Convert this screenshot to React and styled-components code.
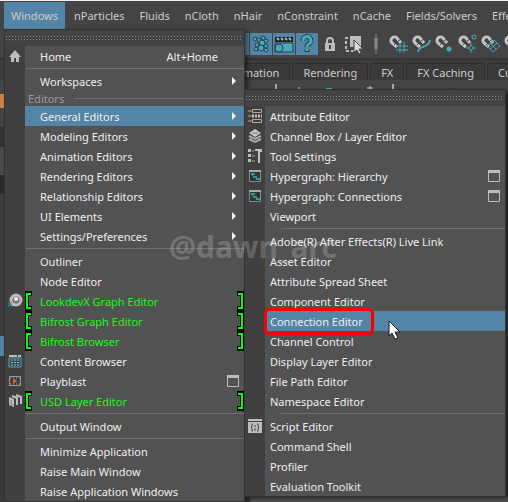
import React from 'react';
import styled, { createGlobalStyle } from 'styled-components';

const Global = createGlobalStyle`
  *, *::before, *::after { box-sizing: border-box; }
  body { margin: 0; background: #444; }
  button { font: inherit; color: inherit; }
`;

const teal = '#49a9b8';
const grey = '#bdbdbd';
const blue = '#5285a6';

const Page = styled.main`
  position: relative;
  display: flex;
  flex-direction: column;
  min-height: 100vh;
  overflow: hidden;
  background: #3d3d3d;
  color: #eee;
  font: 11px/20px 'Noto Sans', 'Open Sans', sans-serif;
`;

const MenuBar = styled.nav`
  display: flex;
  gap: 3px;
  height: 29px;
  padding: 1px 0 0 4px;
  border-top: 1px solid #f0f0f0;
  background: #444;
`;

const BarItem = styled.button`
  flex: none;
  padding: 0 ${(p) => (p.$open ? 7 : 6)}px;
  border: 0;
  line-height: 27px;
  white-space: nowrap;
  color: #ccc;
  background: ${(p) => (p.$open ? blue : 'transparent')};
`;

const Toolbar = styled.div`
  display: flex;
  align-items: center;
  gap: 1px;
  height: 29px;
  padding-left: 227px;
  background: #444;
`;

const Tool = styled.button`
  flex: none;
  display: grid;
  place-items: center;
  width: 22px;
  height: 22px;
  padding: 0;
  border: 0;
  background: ${(p) => (p.$on ? blue : 'transparent')};
`;

const Tabs = styled.div`
  display: flex;
  align-items: flex-end;
  gap: 2px;
  height: 22px;
  padding-left: 215px;
  border-top: 2px solid #353535;
  background: #3d3d3d;
`;

const Tab = styled.button`
  flex: none;
  height: 17px;
  padding: 0 10px;
  border: 1px solid #2e2e2e;
  border-bottom: 0;
  border-radius: 3px 3px 0 0;
  line-height: 17px;
  white-space: nowrap;
  color: #ccc;
  background: #3a3a3a;
`;

const Shelf = styled.div`
  display: flex;
  height: 14px;
  padding: 3px 0 0 262px;
  background: #444;
`;

const SideStrip = styled.div`
  display: flex;
  flex: 1;
  flex-direction: column;
  background: #3a3a3a;
`;

const Block = styled.div`
  flex: none;
  width: 4px;
  height: ${(p) => p.$h}px;
  background: ${(p) => p.$c};
`;

const StatusStrip = styled.div`
  height: 5px;
  margin: auto 0 0 250px;
  background: #535353;
`;

const MenuPanel = styled.div`
  position: absolute;
  z-index: 1;
  top: ${(p) => p.$top}px;
  left: ${(p) => p.$left}px;
  width: ${(p) => p.$width}px;
  border: 1px solid #333;
  background: linear-gradient(90deg, #404040 20px, #525252 20px);
  box-shadow: 3px 2px 4px rgba(0, 0, 0, 0.45);
`;

const TearOff = styled.div`
  height: 16px;
  padding: 6px 1px 0;
  background: #434343;

  &::before {
    content: '';
    display: block;
    height: 4px;
    background:
      linear-gradient(90deg, #858585 1px, transparent 1px) 0 0 / 3px 1px repeat-x,
      linear-gradient(90deg, #858585 1px, transparent 1px) 0 3px / 3px 1px repeat-x;
  }
`;

const Row = styled.div`
  display: flex;
  align-items: center;
  height: 20px;
  color: ${(p) => (p.$green ? '#19fa19' : '#eee')};
  background: ${(p) => (p.$active ? `linear-gradient(90deg, transparent 20px, ${blue} 20px)` : 'transparent')};
`;

const Command = styled.button`
  display: flex;
  flex: 1;
  align-items: center;
  height: 20px;
  padding: 0;
  border: 0;
  text-align: left;
  white-space: nowrap;
  background: none;
`;

const IconCell = styled.span`
  display: grid;
  flex: none;
  place-items: center;
  width: 20px;
  height: 20px;
`;

const Lead = styled.span`
  display: flex;
  flex: none;
  width: ${(p) => p.$w}px;
`;

const Label = styled.span`
  flex: 1;
  padding-top: 2px;
`;

const Shortcut = styled.span`
  padding: 2px 26px 0 0;
`;

const Trail = styled.span`
  display: flex;
  padding-right: ${(p) => p.$end}px;
`;

const OptionBox = styled.button`
  display: flex;
  margin-right: 5px;
  padding: 0;
  border: 0;
  background: none;
`;

const Divider = styled.hr`
  height: 1px;
  margin: 2px 0 2px ${(p) => p.$inset}px;
  border: 0;
  background: #707070;
`;

const Section = styled.div`
  display: flex;
  align-items: center;
  gap: 10px;
  height: 15px;
  padding-left: 23px;
  line-height: 15px;
  color: #9c9c9c;

  &::after {
    content: '';
    flex: 1;
    height: 1px;
    background: #707070;
  }
`;

const Highlight = styled.div`
  position: absolute;
  z-index: 3;
  top: 308px;
  left: 264px;
  width: 110px;
  height: 27px;
  border: 3px solid #f00;
  border-radius: 5px;
`;

const Watermark = styled.div`
  position: absolute;
  z-index: 2;
  top: 225px;
  left: 169px;
  font: bold 30px/44px 'Noto Sans', sans-serif;
  color: rgba(255, 255, 255, 0.2);
  pointer-events: none;
`;

const Pointer = styled.svg`
  position: absolute;
  z-index: 4;
  top: 320px;
  left: 388px;
`;

const Svg = ({ children, w = 16, h = 16 }) => (
  <svg width={w} height={h} viewBox={`0 0 ${w} ${h}`} fill="none" aria-hidden="true">
    {children}
  </svg>
);

const WindowIcon = () => (
  <Svg w={12} h={12}>
    <path d="M.5.5h11v11H.5z" stroke={grey} />
    <path d="M0 0h12v3H0z" fill={grey} />
  </Svg>
);

const Arrow = () => (
  <Svg w={4} h={8}>
    <path d="M0 0l4 4-4 4z" fill="#f4f4f4" />
  </Svg>
);

const Bracket = ({ right }) => (
  <Svg w={7} h={20}>
    <g transform={right ? 'translate(7 0) scale(-1 1)' : undefined}>
      <path d="M0 0h7v5H4v10h3v5H0z" fill="#000" />
      <path d="M6 3H2v14h4" stroke="#0f0" strokeWidth="2" />
    </g>
  </Svg>
);

const HypergraphIcon = () => (
  <Svg>
    <path d="M2.5 2.5h11v11h-11z" fill="#333" stroke="#8a8a8a" />
    <path d="M2 2h12v2H2z" fill="#aaa" />
    <path d="M4 5h4v2H4zM6 8h4v2H6zM9 10h4v2H9z" fill="#1ba39c" />
    <path d="M5 7l2 2M8 9l2 2" stroke="#1ba39c" />
  </Svg>
);

const icons = {
  home: (
    <Svg>
      <path d="M2 9l6-7 6 7h-2v5H9v-4H7v4H4V9z" fill={grey} />
    </Svg>
  ),
  lookdev: (
    <Svg>
      <circle cx="9" cy="7" r="5" fill="#777" stroke={grey} strokeWidth="3" />
      <circle cx="9" cy="6" r="2" fill="#f0f0f0" />
      <path d="M5 12h7" stroke={grey} strokeWidth="2" />
      <path d="M1 9l4 5M5 9l-4 5" stroke="#2b9fb3" />
    </Svg>
  ),
  content: (
    <Svg>
      <path d="M2 2h8v2H2zM11 2h3v2h-3z" fill={grey} />
      <path d="M2 5h12v9H2z" fill="#36474a" stroke={teal} />
      <path d="M4 7h8M4 9.500h8M4 12h8" stroke="#9cc3c9" strokeDasharray="2 1" />
    </Svg>
  ),
  blast: (
    <Svg>
      <path d="M2.5 3.5h11v9h-11z" stroke="#999" />
      <path d="M3 5h10M3 11h10" stroke="#999" strokeDasharray="1 2" />
      <path d="M6 5l4 3-4 3z" fill="#d8642e" />
    </Svg>
  ),
  usd: (
    <Svg>
      <path d="M2 4l5 2v8l-5-2z" fill={grey} />
      <path d="M5 3l5 2v7M9 2l5 2v7" stroke={grey} strokeWidth="2" />
      <path d="M4 7v4l2 1" stroke="#777" />
    </Svg>
  ),
  attribute: (
    <Svg>
      <path d="M1 3h4M1 8h4M1 13h4" stroke="#aaa" />
      <path d="M5.5 1.5h9v3h-9zM5.5 11.5h9v3h-9z" stroke="#aaa" />
      <path d="M5 8h10" stroke={grey} strokeWidth="3" strokeDasharray="2 1" />
    </Svg>
  ),
  layers: (
    <Svg>
      <path d="M8 1l6 4-6 4-6-4z" fill="#c8c8c8" />
      <path d="M2 8l6 3 6-3M2 11l6 3 6-3" stroke="#aaa" strokeWidth="2" />
      <path d="M5 5h6" stroke="#777" />
    </Svg>
  ),
  tools: (
    <Svg>
      <path d="M1 1h3v3H1zM1 6h3v3H1zM1 11h3v3H1z" fill={grey} />
      <path d="M5 3h2M5 8h3M5 13h3" stroke="#aaa" />
      <path d="M8 1h7v3h-2v11h-2V3H8z" fill={grey} />
    </Svg>
  ),
  hyper: <HypergraphIcon />,
  script: (
    <Svg>
      <path d="M1 1h14v2H1zM1 4h14v11H1z" fill={grey} />
      <path d="M6 6H5v2l-1 1 1 1v3h1M10 6h1v2l1 1-1 1v3h-1M8 7v2M8 10v3" stroke="#444" />
    </Svg>
  ),
};

const Magnet = ({ children }) => (
  <Svg w={22} h={22}>
    <path d="M13 10l-4-5a3.500 3.500 0 0 0-5 5l5 4" stroke="#c4c4c4" strokeWidth="3" />
    <path d="M10 8l3-2M6 12l2-2" stroke="#444" />
    {children}
  </Svg>
);

const tools = [
  { name: 'Snap selection', on: true, icon: null },
  {
    name: 'Particles',
    on: true,
    icon: (
      <Svg w={22} h={22}>
        <g fill={teal} stroke="#28414b">
          <circle cx="5" cy="6" r="2" /><circle cx="9" cy="7" r="2" /><circle cx="13" cy="5" r="2" />
          <circle cx="16" cy="8" r="2" /><circle cx="12" cy="10" r="3" /><circle cx="7" cy="12" r="2" />
          <circle cx="16" cy="13" r="2" /><circle cx="11" cy="15" r="3" /><circle cx="6" cy="16" r="2" />
          <circle cx="16" cy="17" r="2" />
        </g>
      </Svg>
    ),
  },
  {
    name: 'Rendering',
    on: true,
    icon: (
      <Svg w={22} h={22}>
        <path d="M2 4h18v5H2z" fill="#222" />
        <path d="M4 5l2 2M8 5l2 2M12 5l2 2M16 5l2 2" stroke="#8fc5d0" strokeWidth="2" />
        <path d="M2 10h18v9H2z" fill={teal} stroke="#28414b" />
        <circle cx="6" cy="15" r="4" fill={teal} stroke="#28414b" />
      </Svg>
    ),
  },
  {
    name: 'Help',
    on: true,
    icon: (
      <Svg w={22} h={22}>
        <path d="M7 8a4 4 0 1 1 6 3q-2 1-2 3M11 16v3" stroke="#253d47" strokeWidth="5" />
        <path d="M7 8a4 4 0 1 1 6 3q-2 1-2 3M11 16v2" stroke={teal} strokeWidth="3" />
      </Svg>
    ),
  },
  {
    name: 'Lock',
    icon: (
      <Svg w={22} h={22}>
        <path d="M8 11V8a3 3 0 0 1 6 0v3" stroke={grey} strokeWidth="2" />
        <path d="M6 10h10v8H6z" fill={grey} />
        <path d="M11 12v4" stroke="#444" strokeWidth="2" />
      </Svg>
    ),
  },
  {
    name: 'Highlight selection',
    icon: (
      <Svg w={22} h={22}>
        <path d="M8 3h11v11H8z" fill={grey} />
        <path d="M6 5H4v13h10" stroke={grey} strokeWidth="2" strokeDasharray="3 2" />
        <path d="M12 7v12l3-2 2 4 2-1-2-4h4z" fill="#ddd" stroke="#444" />
      </Svg>
    ),
  },
  {
    name: 'Collapse group',
    icon: (
      <Svg w={22} h={22}>
        <path d="M11 1v20" stroke="#888" />
        <path d="M11 5v11" stroke="#888" strokeWidth="3" />
      </Svg>
    ),
  },
  {
    name: 'Snap to grids',
    icon: <Magnet><path d="M12 9v11M16 9v11M8 13h12M8 17h12" stroke={teal} /></Magnet>,
  },
  {
    name: 'Snap to curves',
    icon: <Magnet><path d="M7 19c0-7 11-3 12-12" stroke={teal} strokeWidth="2" /></Magnet>,
  },
  {
    name: 'Snap to points',
    icon: <Magnet><circle cx="15" cy="16" r="2.500" fill={teal} /></Magnet>,
  },
  {
    name: 'Snap to projected center',
    icon: (
      <Magnet>
        <circle cx="17" cy="4" r="2" stroke={teal} />
        <circle cx="14" cy="15" r="2" stroke={teal} />
        <path d="M14 10v3M14 17v3M9 15h3M16 15h3" stroke={teal} />
      </Magnet>
    ),
  },
  {
    name: 'Snap to view planes',
    icon: <Magnet><path d="M14 7l6 6-7 6-6-6zM10 10l6 6M17 10l-7 6" stroke={teal} /></Magnet>,
  },
  { name: 'Make live', icon: <Magnet /> },
];

const windowsMenu = [
  { label: 'Home', icon: 'home', keys: 'Alt+Home' },
  { rule: true },
  { label: 'Workspaces', sub: true },
  { section: 'Editors' },
  { label: 'General Editors', sub: true, active: true },
  { label: 'Modeling Editors', sub: true },
  { label: 'Animation Editors', sub: true },
  { label: 'Rendering Editors', sub: true },
  { label: 'Relationship Editors', sub: true },
  { label: 'UI Elements', sub: true },
  { label: 'Settings/Preferences', sub: true },
  { rule: true },
  { label: 'Outliner' },
  { label: 'Node Editor' },
  { label: 'LookdevX Graph Editor', icon: 'lookdev', green: true },
  { label: 'Bifrost Graph Editor', green: true },
  { label: 'Bifrost Browser', green: true },
  { label: 'Content Browser', icon: 'content' },
  { label: 'Playblast', icon: 'blast', box: true },
  { label: 'USD Layer Editor', icon: 'usd', green: true },
  { rule: true },
  { label: 'Output Window' },
  { rule: true },
  { label: 'Minimize Application' },
  { label: 'Raise Main Window' },
  { label: 'Raise Application Windows' },
];

const editorsMenu = [
  { label: 'Attribute Editor', icon: 'attribute' },
  { label: 'Channel Box / Layer Editor', icon: 'layers' },
  { label: 'Tool Settings', icon: 'tools' },
  { label: 'Hypergraph: Hierarchy', icon: 'hyper', box: true },
  { label: 'Hypergraph: Connections', icon: 'hyper', box: true },
  { label: 'Viewport' },
  { rule: true },
  { label: 'Adobe(R) After Effects(R) Live Link' },
  { label: 'Asset Editor' },
  { label: 'Attribute Spread Sheet' },
  { label: 'Component Editor' },
  { label: 'Connection Editor', active: true },
  { label: 'Channel Control' },
  { label: 'Display Layer Editor' },
  { label: 'File Path Editor' },
  { label: 'Namespace Editor' },
  { rule: true },
  { label: 'Script Editor', icon: 'script' },
  { label: 'Command Shell' },
  { label: 'Profiler' },
  { label: 'Evaluation Toolkit' },
];

const Menu = ({ items, name, top, left, width, lead, inset }) => (
  <MenuPanel $top={top} $left={left} $width={width} aria-label={name}>
    <TearOff />
    {items.map((item, i) => {
      if (item.rule) return <Divider key={i} $inset={inset} />;
      if (item.section) return <Section key={i}>{item.section}</Section>;
      return (
        <Row key={i} $active={item.active} $green={item.green}>
          <Command>
            <IconCell>{icons[item.icon]}</IconCell>
            <Lead $w={lead}>{item.green && <Bracket />}</Lead>
            <Label>{item.label}</Label>
            {item.keys && <Shortcut>{item.keys}</Shortcut>}
            {item.sub && <Trail $end={8}><Arrow /></Trail>}
            {item.green && <Trail $end={0}><Bracket right /></Trail>}
          </Command>
          {item.box && <OptionBox aria-label={`${item.label} options`}><WindowIcon /></OptionBox>}
        </Row>
      );
    })}
  </MenuPanel>
);

const barItems = ['Windows', 'nParticles', 'Fluids', 'nCloth', 'nHair', 'nConstraint', 'nCache', 'Fields/Solvers', 'Effects'];
const tabs = ['Animation', 'Rendering', 'FX', 'FX Caching', 'Custom'];

export default function App() {
  return (
    <Page>
      <Global />
      <MenuBar>
        {barItems.map((t, i) => <BarItem key={t} $open={i === 0}>{t}</BarItem>)}
      </MenuBar>
      <Toolbar>
        {tools.map((t) => <Tool key={t.name} $on={t.on} aria-label={t.name}>{t.icon}</Tool>)}
      </Toolbar>
      <Tabs>
        {tabs.map((t) => <Tab key={t}>{t}</Tab>)}
      </Tabs>
      <Shelf>
        <Svg w={200} h={8}>
          <path d="M14 1v7M131 1v7" stroke="#aaa" strokeWidth="2" />
          <path d="M37 4v4M64 6h6" stroke={teal} strokeWidth="2" />
          <path d="M105 5h6M108 3v5" stroke="#ccc" />
          <path d="M150 6h6M186 6h8" stroke="#333" />
        </Svg>
      </Shelf>
      <SideStrip>
        <Block $h={14} $c="#c98345" />
        <Block $h={19} $c="#444" />
        <Block $h={20} $c="#333" />
        <Block $h={28} $c="#4a4a4a" />
        <Block $h={19} $c="#2b2b2b" />
        <Block $h={142} $c="#3d3d3d" />
        <Block $h={20} $c={blue} />
        <StatusStrip />
      </SideStrip>
      <Menu name="Windows" items={windowsMenu} top={29} left={4} width={241} lead={15} inset={21} />
      <Menu name="General Editors" items={editorsMenu} top={89} left={244} width={262} lead={5} inset={36} />
      <Watermark>@dawn_arc</Watermark>
      <Highlight />
      <Pointer width="13" height="20" viewBox="0 0 13 20" aria-hidden="true">
        <path d="M1 1v15l3-3 3 6 3-1-3-6h5z" fill="#fff" stroke="#1b1b2b" />
      </Pointer>
    </Page>
  );
}
